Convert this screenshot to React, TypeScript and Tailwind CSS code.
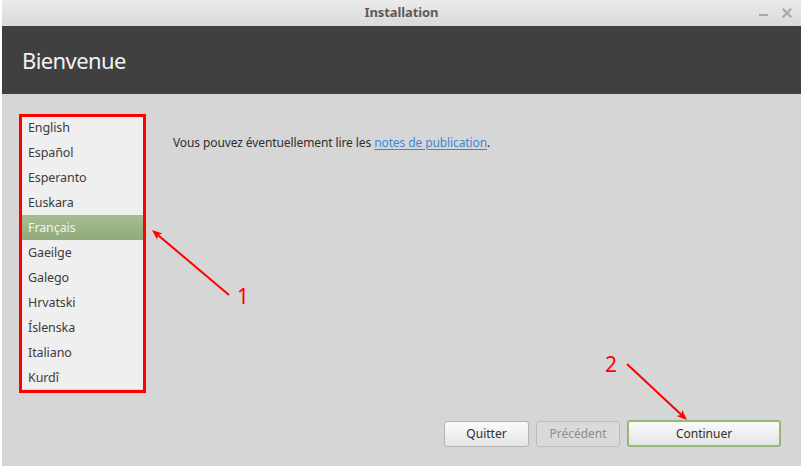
import React from "react";

const languages = [
  "English",
  "Español",
  "Esperanto",
  "Euskara",
  "Français",
  "Gaeilge",
  "Galego",
  "Hrvatski",
  "Íslenska",
  "Italiano",
  "Kurdî",
];

const selected = "Français";

function Arrow({ x1, y1, x2, y2 }: { x1: number; y1: number; x2: number; y2: number }) {
  const ang = Math.atan2(y2 - y1, x2 - x1);
  const len = 11;
  const spread = 0.38;
  const ax = x2 - len * Math.cos(ang - spread);
  const ay = y2 - len * Math.sin(ang - spread);
  const bx = x2 - len * Math.cos(ang + spread);
  const by = y2 - len * Math.sin(ang + spread);
  const mx = x2 - len * 0.7 * Math.cos(ang);
  const my = y2 - len * 0.7 * Math.sin(ang);
  return (
    <g>
      <line x1={x1} y1={y1} x2={mx} y2={my} stroke="#ff0000" strokeWidth={2} />
      <polygon points={`${x2},${y2} ${ax},${ay} ${mx},${my} ${bx},${by}`} fill="#ff0000" />
    </g>
  );
}

export default function App() {
  return (
    <div
      className="relative w-[801px] h-[469px] bg-white pl-[2px] pb-[3px] flex flex-col overflow-hidden"
      style={{ fontFamily: '"Noto Sans", "Open Sans", sans-serif' }}
    >
      {/* window title bar */}
      <div className="relative h-[26px] shrink-0 bg-gradient-to-b from-[#ebebeb] to-[#d9d9d9] flex items-center justify-center">
        <span className="text-[13px] font-bold text-[#5b5b5b] tracking-[-0.1px]">Installation</span>
        <div className="absolute right-[9px] top-0 h-full flex items-center gap-[14px] text-[#a8a8a8]">
          <span className="block w-[9px] h-[2px] bg-[#a8a8a8] mt-[4px]" />
          <svg width="10" height="10" viewBox="0 0 10 10">
            <path d="M1.5 1.5 L8.5 8.5 M8.5 1.5 L1.5 8.5" stroke="#a8a8a8" strokeWidth="2.2" strokeLinecap="square" />
          </svg>
        </div>
      </div>

      {/* page header */}
      <div className="h-[68px] shrink-0 bg-[#404040] flex items-center pl-[20px]">
        <h1 className="text-[22px] text-[#f2f2f2] font-normal tracking-[-0.6px] leading-none pb-[1px]">Bienvenue</h1>
      </div>

      {/* page body */}
      <div className="flex-1 bg-[#d6d6d6] flex flex-col justify-between pt-[21px] pl-[20px] pr-[20px] pb-[19px]">
        <div className="flex">
          <div className="w-[121px] h-[274px] bg-[#efefef] overflow-hidden flex flex-col">
            {languages.map((l) => (
              <div
                key={l}
                className={
                  l === selected
                    ? "h-[25px] shrink-0 flex items-center pl-[6px] pt-[1px] text-[12.5px] tracking-[-0.1px] text-[#f4f4f4] bg-gradient-to-b from-[#a6bd91] to-[#91aa7b]"
                    : "h-[25px] shrink-0 flex items-center pl-[6px] pt-[1px] text-[12.5px] tracking-[-0.1px] text-[#3c3c3c]"
                }
              >
                {l}
              </div>
            ))}
            <div className="mt-[-1px] mx-[2px] border-t border-dashed border-[#c4c4c4]" />
          </div>
          <p className="ml-[30px] mt-[20px] text-[12px] tracking-[-0.1px] text-[#2e2e2e] leading-[16px]">
            Vous pouvez éventuellement lire les{" "}
            <span className="text-[#3b89d6] underline underline-offset-2">notes de publication</span>.
          </p>
        </div>

        <div className="flex justify-end items-center">
          <button className="w-[85px] h-[26px] rounded-[3px] border border-[#b4b4b4] bg-gradient-to-b from-[#fbfbfb] to-[#e4e4e4] text-[12px] text-[#2e2e2e]">
            Quitter
          </button>
          <button className="ml-[7px] w-[84px] h-[26px] rounded-[3px] border border-[#bcbcbc] bg-[#dadada] text-[12px] text-[#8e8e8e]">
            Précédent
          </button>
          <button className="ml-[7px] w-[154px] h-[27px] rounded-[3px] border-2 border-[#95b979] bg-gradient-to-b from-[#fbfbfb] to-[#e4e4e4] text-[12px] text-[#2e2e2e]">
            Continuer
          </button>
        </div>
      </div>

      {/* annotation layer */}
      <div className="absolute left-[19px] top-[114px] w-[127px] h-[279px] border-[3px] border-[#ff0000]" />
      <svg className="absolute left-0 top-0 pointer-events-none" width="801" height="469">
        <Arrow x1={229} y1={295} x2={152} y2={230} />
        <Arrow x1={627} y1={364} x2={687} y2={420} />
        <text x={237} y={304} fill="#ff0000" fontSize="21" fontFamily="'Noto Sans', sans-serif">1</text>
        <text x={605} y={372} fill="#ff0000" fontSize="21" fontFamily="'Noto Sans', sans-serif">2</text>
      </svg>
    </div>
  );
}
